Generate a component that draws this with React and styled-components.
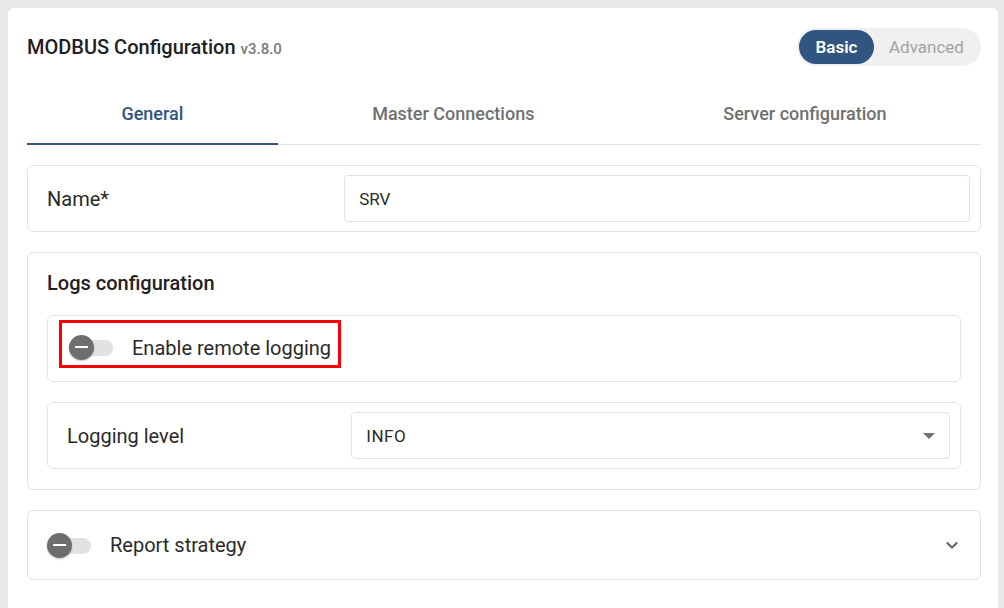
import React from "react";
import styled, { createGlobalStyle } from "styled-components";

const GlobalStyle = createGlobalStyle`
  html, body {
    margin: 0;
    padding: 0;
    background: #e9e9e9;
    font-family: Roboto, "Liberation Sans", sans-serif;
  }
  * { box-sizing: border-box; }
`;

const Page = styled.div`
  padding: 8px 6px 0 8px;
  height: 608px;
  overflow: hidden;
`;

const Card = styled.div`
  background: #fff;
  border-radius: 6px 6px 0 0;
  padding: 20px 17px 40px 19px;
  min-height: 620px;
`;

const Header = styled.div`
  display: flex;
  align-items: center;
  justify-content: space-between;
  height: 38px;
`;

const Title = styled.h1`
  margin: 0;
  font-size: 20px;
  font-weight: 500;
  color: #212121;
  .version {
    font-size: 15px;
    color: #7a7a7a;
    margin-left: 5px;
  }
`;

const ModeSwitch = styled.div`
  display: flex;
  align-items: center;
  height: 38px;
  width: 184px;
  padding: 2px;
  border-radius: 19px;
  background: #f0f0f0;
`;

const ModeButton = styled.div`
  height: 34px;
  border-radius: 17px;
  display: flex;
  align-items: center;
  justify-content: center;
  font-size: 17px;
  font-weight: ${(p) => (p.$active ? 600 : 400)};
  width: ${(p) => (p.$active ? "75px" : "auto")};
  flex: ${(p) => (p.$active ? "none" : 1)};
  background: ${(p) => (p.$active ? "#2f5580" : "transparent")};
  color: ${(p) => (p.$active ? "#fff" : "#a3a3a3")};
`;

const Tabs = styled.div`
  display: flex;
  margin-top: 18px;
  border-bottom: 1px solid #e2e2e2;
`;

const Tab = styled.div`
  flex: 1 1 auto;
  height: 61px;
  display: flex;
  align-items: center;
  justify-content: center;
  font-size: 18px;
  font-weight: 500;
  color: ${(p) => (p.$active ? "#2f5580" : "#707070")};
  border-bottom: 2px solid ${(p) => (p.$active ? "#2f5580" : "transparent")};
  margin-bottom: -1px;
  padding: 0 2px;
`;

const Stack = styled.div`
  display: flex;
  flex-direction: column;
  gap: 20px;
  margin-top: 20px;
`;

const Box = styled.div`
  border: 1px solid #e2e2e2;
  border-radius: 6px;
  background: #fff;
`;

const FieldRow = styled(Box)`
  display: grid;
  grid-template-columns: 32.2% 1fr;
  align-items: center;
  height: 67px;
  padding: 0 10px 0 19px;
`;

const Label = styled.div`
  font-size: 20px;
  color: #2a2a2a;
`;

const Input = styled.div`
  height: 47px;
  border: 1px solid #e2e2e2;
  border-radius: 4px;
  display: flex;
  align-items: center;
  justify-content: space-between;
  padding: 0 14px;
  font-size: 17px;
  letter-spacing: ${(p) => (p.$wide ? "0.5px" : "0")};
  color: #2a2a2a;
`;

const Caret = styled.span`
  width: 0;
  height: 0;
  border-left: 6px solid transparent;
  border-right: 6px solid transparent;
  border-top: 6px solid #707070;
`;

const Section = styled(Box)`
  padding: 19px 19px 20px 19px;
  display: flex;
  flex-direction: column;
  gap: 20px;
`;

const SectionTitle = styled.div`
  font-size: 20px;
  font-weight: 500;
  color: #212121;
  line-height: 23px;
`;

const SwitchRow = styled(Box)`
  display: flex;
  align-items: center;
  height: ${(p) => p.$h || 67}px;
  padding: 0 20px 0 ${(p) => p.$pl || 20}px;
`;

const Highlight = styled.div`
  display: flex;
  align-items: center;
  align-self: flex-start;
  gap: 19px;
  border: 3px solid #ff0000;
  padding: 7px 7px 0 7px;
  margin: 4px 0 0 -9px;
  height: 48px;
`;

const SwitchTrack = styled.span`
  position: relative;
  display: inline-block;
  width: 44px;
  height: 25px;
  flex: none;
  &::before {
    content: "";
    position: absolute;
    left: 6px;
    right: 0;
    top: 5px;
    height: 16px;
    border-radius: 8px;
    background: #e2e2e2;
  }
`;

const Thumb = styled.span`
  position: absolute;
  left: 0;
  top: 0;
  width: 25px;
  height: 25px;
  border-radius: 50%;
  background: #6e6e6e;
  box-shadow: 0 1px 2px rgba(0, 0, 0, 0.25);
  &::after {
    content: "";
    position: absolute;
    left: 6px;
    right: 6px;
    top: 11px;
    height: 2px;
    background: #fff;
  }
`;

const SwitchLabel = styled.span`
  font-size: 20px;
  color: #2a2a2a;
  margin-left: ${(p) => p.$gap || 0}px;
`;

const Chevron = styled.svg`
  margin-left: auto;
  flex: none;
`;

function Toggle() {
  return (
    <SwitchTrack>
      <Thumb />
    </SwitchTrack>
  );
}

export default function App() {
  return (
    <>
      <GlobalStyle />
      <Page>
        <Card>
          <Header>
            <Title>
              MODBUS Configuration<span className="version">v3.8.0</span>
            </Title>
            <ModeSwitch>
              <ModeButton $active>Basic</ModeButton>
              <ModeButton>Advanced</ModeButton>
            </ModeSwitch>
          </Header>

          <Tabs>
            <Tab $active>General</Tab>
            <Tab>Master Connections</Tab>
            <Tab>Server configuration</Tab>
          </Tabs>

          <Stack>
            <FieldRow>
              <Label>Name*</Label>
              <Input>SRV</Input>
            </FieldRow>

            <Section>
              <SectionTitle>Logs configuration</SectionTitle>
              <SwitchRow>
                <Highlight>
                  <Toggle />
                  <SwitchLabel>Enable remote logging</SwitchLabel>
                </Highlight>
              </SwitchRow>
              <FieldRow>
                <Label>Logging level</Label>
                <Input $wide>
                  INFO
                  <Caret />
                </Input>
              </FieldRow>
            </Section>

            <SwitchRow $h={70} $pl={19}>
              <Toggle />
              <SwitchLabel $gap={19}>Report strategy</SwitchLabel>
              <Chevron width="16" height="16" viewBox="0 0 24 24" fill="none" stroke="#5f5f5f" strokeWidth="3" strokeLinecap="round" strokeLinejoin="round">
                <polyline points="5 9 12 16 19 9" />
              </Chevron>
            </SwitchRow>
          </Stack>
        </Card>
      </Page>
    </>
  );
}
